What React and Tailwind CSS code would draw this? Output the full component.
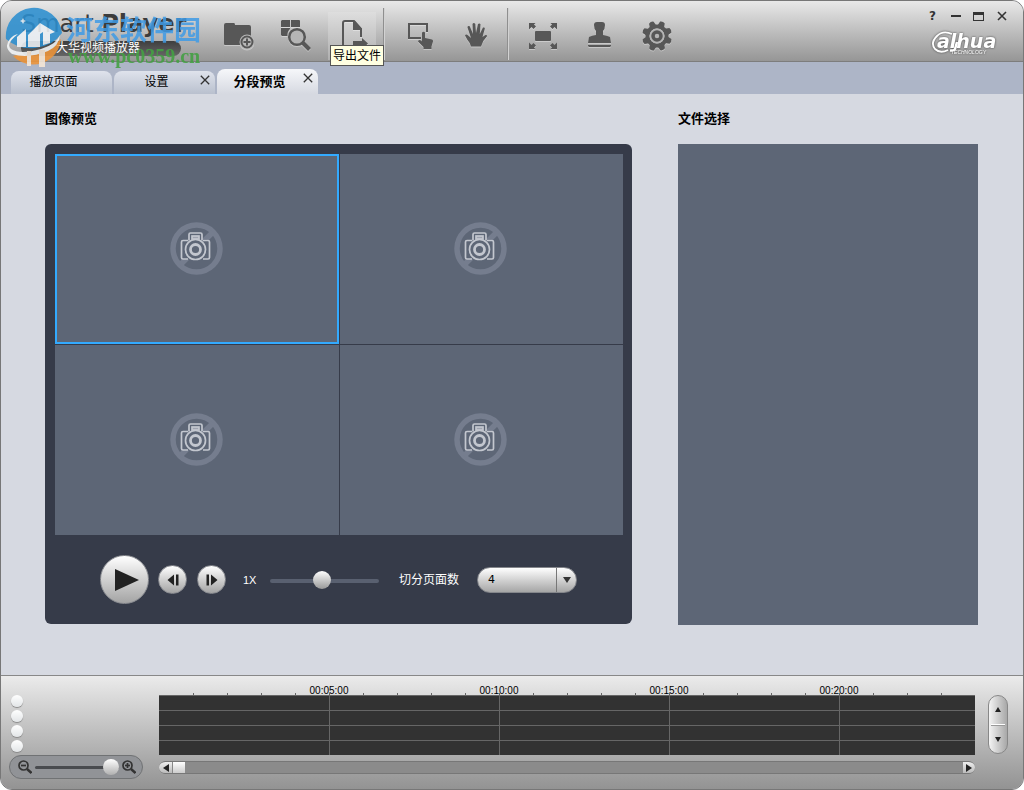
import React, { useState } from 'react';
import clsx from 'clsx';

const TABS = [
  { id: 'play', label: '播放页面', closable: false },
  { id: 'settings', label: '设置', closable: true },
  { id: 'preview', label: '分段预览', closable: true },
];

const MARKS = [
  { time: '00:05:00', col: 'col-start-5' },
  { time: '00:10:00', col: 'col-start-10' },
  { time: '00:15:00', col: 'col-start-15' },
  { time: '00:20:00', col: 'col-start-20' },
];

function ToolIcon({ children }) {
  return (
    <svg viewBox="0 0 32 32" className="w-8 h-8 text-[#575757] drop-shadow-[0_1px_0_rgba(255,255,255,0.35)]" fill="currentColor">
      {children}
    </svg>
  );
}

function AddFolderIcon() {
  return (
    <ToolIcon>
      <path d="M2 5q0-2 2-2h8q1 0 1 2h14q2 0 2 2v18H3q-1 0-1-1z" />
      <circle cx="25" cy="22" r="7.5" fill="#b9b9b9" />
      <circle cx="25" cy="22" r="5.5" fill="none" stroke="currentColor" strokeWidth="2" />
      <path d="M24 18.500h2V21h2.500v2H26v2.500h-2V23h-2.500v-2H24z" />
    </ToolIcon>
  );
}

function SearchGridIcon() {
  return (
    <ToolIcon>
      <path d="M3 0h8v7H2V1zM12 0h8q1 0 1 1v6h-9zM2 8h9v1q-3 3-2.500 7H3l-1-1z" />
      <circle cx="18" cy="17" r="7.800" fill="#b5b5b5" stroke="currentColor" strokeWidth="2.500" />
      <path d="M23.500 22.500l7 7" stroke="currentColor" strokeWidth="4" />
    </ToolIcon>
  );
}

function ExportIcon() {
  return (
    <ToolIcon>
      <path d="M7 30V3q0-2 2-2h9l7 8v8" fill="none" stroke="currentColor" strokeWidth="2" />
      <path d="M17 1h2l7 8v1h-9zM17 21h9v-3l6 5.500-6 5.500v-3h-9z" />
    </ToolIcon>
  );
}

function SelectAreaIcon() {
  return (
    <ToolIcon>
      <path d="M18 18H6V4h18v8" fill="none" stroke="currentColor" strokeWidth="2" />
      <path d="M19 12.500q2-1.500 3 0V18l7 1.500q1.300.500 1 2l-1.500 5V29h-8v-2l-5.500-5.500q.5-2.500 3-1l1 1z" />
    </ToolIcon>
  );
}

function HandIcon() {
  return (
    <ToolIcon>
      <path d="M11 26.500q-1-4-3.500-6.500L5 15.500q1-1.500 2.500-.5L11 18 7.500 7.500q0-2 2.200-1.300L13 14l-.5-10q1.300-1.800 2.800 0L16 13 18 4q1.700-1.300 2.500.3L19.800 14 23 7.500q2-.5 1.800 1.200L22.500 17l3-2q1.700-.3 1.500 1.200Q23 20 21 26.500z" />
    </ToolIcon>
  );
}

function FullscreenIcon() {
  return (
    <ToolIcon>
      <rect x="8" y="11" width="16" height="10" rx="1" />
      <path d="M2 3h6.500L7 4.500l2 2-2.500 2.500-2-2L2 9.500zM30 3h-6.500L25 4.500l-2 2 2.500 2.500 2-2L30 9.500zM2 29h6.500L7 27.500l2-2L6.500 23l-2 2L2 22.500zM30 29h-6.500l1.500-1.500-2-2 2.500-2.500 2 2 2.500-2.500z" />
    </ToolIcon>
  );
}

function StampIcon() {
  return (
    <ToolIcon>
      <path d="M10 5q0-3 3-3h5q3 0 3 3 0 4-2 6v4q5 1 7 2l1 6H4l1-6q3-1.500 7-2v-4q-2-2-2-6zM4 25h23v1l-1 1H5l-1-1z" />
    </ToolIcon>
  );
}

function GearIcon() {
  return (
    <ToolIcon>
      {[0, 45, 90, 135].map((deg) => (
        <path key={deg} transform={`rotate(${deg + 22} 16 16)`} d="M13.500 1.500q2.500-1.500 5 0L19.500 6h-7zM13.500 30.500q2.500 1.500 5 0l1-4.500h-7z" />
      ))}
      <circle cx="16" cy="16" r="9.500" fill="none" stroke="currentColor" strokeWidth="4" />
      <circle cx="16" cy="16" r="7.500" fill="#b4b4b4" />
      <circle cx="16" cy="16" r="4" fill="none" stroke="currentColor" strokeWidth="3.500" />
    </ToolIcon>
  );
}

function ToolButton({ label, active, tooltip, children }) {
  return (
    <button
      type="button"
      aria-label={label}
      className={clsx('relative w-12 h-12 flex items-center justify-center', active && 'bg-linear-to-b from-[#dedede] to-[#b0b0b0]')}
    >
      {children}
      {tooltip && (
        <span className="absolute left-0.5 top-[33px] z-20 h-[21px] w-[54px] border border-[#555] bg-[#ffffe1] text-center text-xs leading-5 whitespace-nowrap text-black">
          {tooltip}
        </span>
      )}
    </button>
  );
}

function Separator() {
  return <div className="w-0.5 h-[52px] ml-[7px] mr-2.5 border-l border-[#8f8f8f] bg-[#d2d2d2]" />;
}

function Watermark() {
  return (
    <svg viewBox="0 0 214 70" className="absolute left-0 top-0 z-10 w-[214px] h-[70px] pointer-events-none">
      <g opacity=".88">
        <path d="M5 38A28 28 0 0 1 61 32Q52 45 34 47 18 49 5 38z" fill="#2c8fd0" />
        <path d="M60 38A28 28 0 0 1 12 55Q22 52 34 51 50 48 60 38z" fill="#ee9438" />
        <path d="M17 33Q4 43 10 48q9 6 30 0 16-5 19-14-1 11-12 16-20 8-36 3Q2 46 9 38q3-4 8-5z" fill="#f4f6f8" />
        <path d="M16 36l9-8v18h-9zM27 34l12-12 15 9-5 2v9l-7 2V31l-3 2v13H27z" fill="#eef3f7" />
        <path d="M26 50h4v15h-4zM38 49h6v17h-6z" fill="#f8e8d6" />
        <path d="M22 17l1 2 2 1-2 1-1 2-1-2-2-1 2-1z" fill="#dcebf6" />
      </g>
      <text x="65" y="39" className="text-[27px] font-bold" fill="#3f9be6" opacity=".85">河东软件园</text>
      <text x="67" y="62" className="font-['Liberation_Serif',serif] text-[20px] font-bold" fill="#44a044" opacity=".9">www.pc0359.cn</text>
    </svg>
  );
}

function BrandLogo() {
  return (
    <svg viewBox="0 0 74 26" role="img" aria-label="alhua" className="w-[74px] h-[26px] overflow-visible drop-shadow-[0_0_1px_rgba(60,60,60,0.9)]">
      <path d="M21 4Q12 0 6 6-1 13 4 19q5 5 13 1" fill="none" stroke="#fff" strokeWidth="1.800" />
      <path d="M26 12l-2 7q-1 2-5 1.500" fill="none" stroke="#fff" strokeWidth="2.500" />
      <text x="6" y="18" className="font-['DejaVu_Sans',sans-serif] text-[19px] font-bold italic" fill="#fff">alhua</text>
      <text x="20" y="24" className="font-['Liberation_Sans',sans-serif] text-[5px] italic" fill="#fff">TECHNOLOGY</text>
    </svg>
  );
}

function WindowButtons() {
  const base = 'w-[23px] h-4 flex items-center justify-center text-[#333]';
  return (
    <div className="flex">
      <button type="button" aria-label="Help" className={clsx(base, "font-['DejaVu_Sans',sans-serif] text-xs font-bold")}>?</button>
      <button type="button" aria-label="Minimize" className={base}><span className="w-2.5 h-0.5 bg-[#333]" /></button>
      <button type="button" aria-label="Maximize" className={base}><span className="w-[11px] h-[9px] border border-t-[3px] border-[#333]" /></button>
      <button type="button" aria-label="Close" className={base}>
        <svg viewBox="0 0 10 10" className="w-2.5 h-2.5"><path d="M1 1l8 8M9 1L1 9" stroke="currentColor" strokeWidth="1.600" /></svg>
      </button>
    </div>
  );
}

function Header() {
  return (
    <header className="relative flex justify-between h-[61px] border-b border-[#7d7d7d] bg-linear-to-b from-[#e9e9e9] to-[#969696]">
      <div className="flex">
        <div className="w-[213px] pl-5 pt-2">
          <h1 className="font-['DejaVu_Sans',sans-serif] text-2xl leading-[30px] whitespace-nowrap text-[#3c3c3c]">
            Smart <b>Player</b>
          </h1>
          <p className="w-[160px] h-[15px] mt-0.5 pl-[35px] rounded-full bg-linear-to-b from-[#3e3e3e] to-[#666] text-xs leading-[15px] text-white">
            大华视频播放器
          </p>
        </div>
        <nav className="flex pt-[7px]">
          <div className="flex gap-[9px] pt-1">
            <ToolButton label="添加文件夹"><AddFolderIcon /></ToolButton>
            <ToolButton label="搜索"><SearchGridIcon /></ToolButton>
            <ToolButton label="导出文件" active tooltip="导出文件"><ExportIcon /></ToolButton>
          </div>
          <Separator />
          <div className="flex gap-[9px] pt-1">
            <ToolButton label="选择区域"><SelectAreaIcon /></ToolButton>
            <ToolButton label="拖动"><HandIcon /></ToolButton>
          </div>
          <Separator />
          <div className="flex gap-[9px] pt-1">
            <ToolButton label="全屏"><FullscreenIcon /></ToolButton>
            <ToolButton label="水印"><StampIcon /></ToolButton>
            <ToolButton label="设置"><GearIcon /></ToolButton>
          </div>
        </nav>
      </div>
      <div className="flex flex-col items-end pt-[7px] pr-2.5">
        <WindowButtons />
        <div className="pt-1.5 pr-2"><BrandLogo /></div>
      </div>
      <Watermark />
    </header>
  );
}

function TabBar({ current, onSelect }) {
  return (
    <div className="flex items-end gap-0.5 h-8 pl-2.5 bg-[#adb5c7]">
      {TABS.map((tab) => {
        const active = tab.id === current;
        return (
          <div
            key={tab.id}
            className={clsx(
              'flex w-[101px] rounded-t-lg',
              active ? 'h-[25px] bg-linear-to-b from-[#f6f7fa] to-[#d6d9e1]' : 'h-[23px] bg-linear-to-b from-[#dfe3ec] to-[#b9c0ce]'
            )}
          >
            <button
              type="button"
              onClick={() => onSelect(tab.id)}
              className={clsx('flex-1 whitespace-nowrap', active ? 'pl-1 text-[13px] leading-6 font-bold' : 'pb-0.5 text-xs leading-5', tab.closable ? 'pl-1' : 'pr-4')}
            >
              {tab.label}
            </button>
            {tab.closable && (
              <button type="button" aria-label={`关闭${tab.label}`} className="flex w-5 h-[17px] items-center justify-center">
                <svg viewBox="0 0 10 10" className="w-2.5 h-2.5 text-[#333]"><path d="M.8.800l8.400 8.400M9.200.800L.8 9.200" stroke="currentColor" strokeWidth="1.300" /></svg>
              </button>
            )}
          </div>
        );
      })}
    </div>
  );
}

function NoVideoIcon() {
  return (
    <svg viewBox="0 0 54 54" className="w-[54px] h-[54px]" fill="none">
      <g stroke="#757d8e" strokeWidth="5.500">
        <circle cx="26.500" cy="26.500" r="23.500" />
        <path d="M43 10L10 43" />
      </g>
      <path d="M18 17.500h-4.500q-2 0-2 2v16q0 2 2 2H37q2 0 2-2v-16q0-2-2-2h-4" fill="#5d6676" />
      <g stroke="#c3c7cf" strokeWidth="1.700">
        <path d="M18 18.500h-5q-1.500 0-1.500 1.500v15.500q0 1.500 1.500 1.500h5M33 18.500h5q1.500 0 1.500 1.500v15.500q0 1.500-1.500 1.500h-5" />
        <path d="M19 18.500v-6q0-1.500 1.500-1.500h10q1.500 0 1.500 1.500v6" fill="#5d6676" />
        <rect x="22" y="14" width="7" height="3" fill="#9ea4b0" />
        <circle cx="25.500" cy="27.500" r="10" fill="#5d6676" />
        <circle cx="25.500" cy="27.500" r="5" strokeWidth="2.800" />
      </g>
    </svg>
  );
}

function PlayerControls() {
  const [pages, setPages] = useState('4');
  const round = 'flex items-center justify-center rounded-full bg-linear-to-b from-white to-[#a4a4a4] border border-[#8b8d92]';
  return (
    <div className="flex items-center h-[89px] pl-[45px] text-xs text-white">
      <button type="button" aria-label="播放" className={clsx(round, 'w-[49px] h-[49px]')}>
        <svg viewBox="0 0 24 22" className="w-6 h-[22px] ml-1"><path d="M0 0l24 11L0 22z" fill="#222" /></svg>
      </button>
      <button type="button" aria-label="上一帧" className={clsx(round, 'w-[29px] h-[29px] ml-[9px]')}>
        <svg viewBox="0 0 12 12" className="w-3 h-3" fill="#222"><path d="M7 .5v11L.5 6zM9 .5h2.500v11H9z" /></svg>
      </button>
      <button type="button" aria-label="下一帧" className={clsx(round, 'w-[29px] h-[29px] ml-2.5')}>
        <svg viewBox="0 0 12 12" className="w-3 h-3" fill="#222"><path d="M5 .5v11L11.500 6zM.5.500H3v11H.5z" /></svg>
      </button>
      <label htmlFor="speed" className="w-[27px] ml-[17px] pt-0.5 font-['Liberation_Sans',sans-serif] text-[11px]">1X</label>
      <input
        id="speed"
        type="range"
        defaultValue="47"
        className="appearance-none w-[109px] h-[18px] mt-0.5 bg-transparent [&::-webkit-slider-runnable-track]:h-1 [&::-webkit-slider-runnable-track]:rounded-full [&::-webkit-slider-runnable-track]:bg-[#596070] [&::-webkit-slider-thumb]:appearance-none [&::-webkit-slider-thumb]:w-[18px] [&::-webkit-slider-thumb]:h-[18px] [&::-webkit-slider-thumb]:-mt-2 [&::-webkit-slider-thumb]:rounded-full [&::-webkit-slider-thumb]:bg-linear-to-b [&::-webkit-slider-thumb]:from-white [&::-webkit-slider-thumb]:to-[#999]"
      />
      <label htmlFor="pages" className="ml-5 whitespace-nowrap">切分页面数</label>
      <div className="relative ml-[18px]">
        <select
          id="pages"
          value={pages}
          onChange={(e) => setPages(e.target.value)}
          className="appearance-none block w-[100px] h-[26px] pl-2.5 pt-0.5 rounded-full border border-[#85878c] bg-linear-to-b from-white to-[#a6a6a6] font-['DejaVu_Sans',sans-serif] text-[11px] text-black"
        >
          <option>1</option>
          <option>4</option>
          <option>9</option>
        </select>
        <span className="absolute right-0 top-px flex w-[21px] h-6 items-center justify-center border-l border-[#777] pointer-events-none">
          <svg viewBox="0 0 8 6" className="w-2 h-1.5"><path d="M0 0h8L4 6z" fill="#333" /></svg>
        </span>
      </div>
    </div>
  );
}

function PreviewPanel() {
  const [selected, setSelected] = useState(0);
  return (
    <section className="flex-1 flex flex-col pb-px">
      <h2 className="h-[18px] mb-4 text-[13px] leading-[18px] font-bold">图像预览</h2>
      <div className="flex-1 flex flex-col rounded-md bg-[#363b49] pt-2.5 pl-2.5 pr-[9px]">
        <div className="flex-1 grid grid-cols-2 grid-rows-2 gap-px">
          {[0, 1, 2, 3].map((i) => (
            <button
              key={i}
              type="button"
              aria-label={`画面 ${i + 1}`}
              onClick={() => setSelected(i)}
              className={clsx('flex items-center justify-center bg-[#5d6676] border-2', selected === i ? 'border-[#33aaff]' : 'border-transparent')}
            >
              <NoVideoIcon />
            </button>
          ))}
        </div>
        <PlayerControls />
      </div>
    </section>
  );
}

function FilePanel() {
  return (
    <section className="w-[300px] flex flex-col">
      <h2 className="h-[18px] mb-4 text-[13px] leading-[18px] font-bold">文件选择</h2>
      <div className="flex-1 bg-[#5d6676]" />
    </section>
  );
}

function ZoomGlyph({ plus }) {
  return (
    <svg viewBox="0 0 14 14" className="w-3.5 h-3.5" fill="none" stroke="#333" strokeWidth="1.700">
      <circle cx="5.500" cy="5.500" r="4.500" />
      <path d="M3 5.500h5" />
      {plus && <path d="M5.500 3v5" />}
      <path d="M9 9l4.500 4" strokeWidth="2.500" />
    </svg>
  );
}

function TrackSidebar() {
  return (
    <div className="w-[150px] pl-2">
      <div className="flex flex-col gap-[3px] pt-[19px] pl-0.5">
        {[1, 2, 3, 4].map((n) => (
          <input
            key={n}
            type="radio"
            name="track"
            aria-label={`通道 ${n}`}
            className="appearance-none w-3 h-3 rounded-full bg-linear-to-b from-white to-[#e2e5e7] shadow-[0_1px_1px_#888]"
          />
        ))}
      </div>
      <div className="flex items-center w-[134px] h-6 mt-[3px] pl-2 rounded-full border border-[#707274] bg-[#919397]">
        <button type="button" aria-label="缩小"><ZoomGlyph /></button>
        <input
          type="range"
          aria-label="时间轴缩放"
          defaultValue="100"
          className="appearance-none w-[84px] h-4 ml-[3px] bg-transparent [&::-webkit-slider-runnable-track]:h-[3px] [&::-webkit-slider-runnable-track]:rounded-full [&::-webkit-slider-runnable-track]:bg-[#494b4f] [&::-webkit-slider-thumb]:appearance-none [&::-webkit-slider-thumb]:w-4 [&::-webkit-slider-thumb]:h-4 [&::-webkit-slider-thumb]:-mt-[7px] [&::-webkit-slider-thumb]:rounded-full [&::-webkit-slider-thumb]:bg-linear-to-b [&::-webkit-slider-thumb]:from-white [&::-webkit-slider-thumb]:to-[#b0b0b0]"
        />
        <button type="button" aria-label="放大" className="ml-[3px]"><ZoomGlyph plus /></button>
      </div>
    </div>
  );
}

function Timeline() {
  return (
    <div className="flex-1 pt-2">
      <div className="grid grid-cols-[repeat(24,minmax(0,1fr))] h-[11px] font-['Liberation_Sans',sans-serif] text-[10px] leading-[14px] text-black">
        {Array.from({ length: 24 }, (_, i) => (
          <div
            key={i}
            className={clsx('row-start-1 self-end h-0.5 translate-x-px border-[#666]', i < 23 && 'border-r')}
            style={{ gridColumnStart: i + 1 }}
          />
        ))}
        {MARKS.map((m) => (
          <span key={m.time} className={clsx('row-start-1 col-span-2 h-[11px] text-center whitespace-nowrap', m.col)}>{m.time}</span>
        ))}
      </div>
      {[1, 2, 3, 4].map((row) => (
        <div key={row} className="grid grid-cols-[5fr_5fr_5fr_5fr_4fr] h-[15px] border-t border-[#666] bg-[#323232]">
          {[1, 2, 3, 4].map((c) => (
            <div key={c} className="border-r border-[#666] translate-x-px" />
          ))}
        </div>
      ))}
      <div className="flex h-[13px] mt-1.5 rounded-full border-y border-[#777] bg-[#8b8b8b] overflow-hidden">
        <button type="button" aria-label="向左" className="flex w-3.5 items-center justify-center border-r border-[#888] bg-linear-to-b from-[#eee] to-[#bbb]">
          <svg viewBox="0 0 6 8" className="w-1.5 h-2"><path d="M6 0v8L0 4z" fill="#222" /></svg>
        </button>
        <div className="w-3 bg-linear-to-b from-white to-[#ccc]" />
        <div className="flex-1" />
        <button type="button" aria-label="向右" className="flex w-3 items-center justify-center bg-linear-to-b from-[#eee] to-[#bbb]">
          <svg viewBox="0 0 6 8" className="w-1.5 h-2"><path d="M0 0v8l6-4z" fill="#222" /></svg>
        </button>
      </div>
    </div>
  );
}

function TrackScroller() {
  return (
    <div className="flex flex-col w-5 h-[59px] mt-[19px] ml-[13px] mr-[15px] px-0.5 rounded-full border border-[#888] bg-linear-to-r from-[#f4f4f4] to-[#a8a8a8]">
      <button type="button" aria-label="向上" className="flex-1 flex items-center justify-center border-b border-white">
        <svg viewBox="0 0 6 6" className="w-1.5 h-1.5"><path d="M3 0l3 5H0z" fill="#222" /></svg>
      </button>
      <button type="button" aria-label="向下" className="flex-1 flex items-center justify-center border-t border-[#999]">
        <svg viewBox="0 0 6 6" className="w-1.5 h-1.5"><path d="M3 6l3-5H0z" fill="#222" /></svg>
      </button>
    </div>
  );
}

export default function App() {
  const [tab, setTab] = useState('preview');

  return (
    <div className="min-h-screen flex flex-col overflow-hidden rounded-xl border border-[#777] bg-[#d6d9e1] font-['Liberation_Sans','Noto_Sans_CJK_SC',sans-serif] text-xs text-black">
      <Header />
      <TabBar current={tab} onSelect={setTab} />
      <main className="flex-1 flex gap-[46px] pl-11 pr-[45px] pt-4 pb-[50px]">
        <PreviewPanel />
        <FilePanel />
      </main>
      <footer className="flex items-start h-[114px] border-t border-[#888] bg-linear-to-b from-[#ebebeb] to-[#939393]">
        <TrackSidebar />
        <div className="w-2" />
        <Timeline />
        <TrackScroller />
      </footer>
    </div>
  );
}
